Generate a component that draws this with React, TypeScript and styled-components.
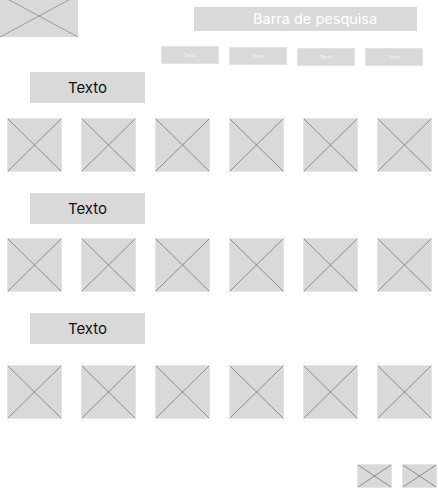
import React from 'react';
import styled, { createGlobalStyle } from 'styled-components';

const GlobalStyle = createGlobalStyle`
    html, body {
        margin: 0;
        padding: 0;
        background: #ffffff;
    }
    body {
        font-family: Inter, 'Noto Sans', sans-serif;
        width: 438px;
        height: 490px;
        overflow: hidden;
    }
`;

const Page = styled.div`
    display: flex;
    flex-direction: column;
    width: 438px;
`;

const Header = styled.header`
    display: flex;
    align-items: flex-start;
`;

const Logo = styled.div`
    width: 78px;
    height: 37px;
    overflow: hidden;
    flex-shrink: 0;
`;

const HeaderRight = styled.div`
    display: flex;
    flex-direction: column;
    padding-left: 83px;
    padding-top: 7px;
`;

const SearchBar = styled.div`
    box-sizing: border-box;
    width: 223px;
    height: 24px;
    margin-left: 33px;
    padding-left: 59px;
    background: #d9d9d9;
    color: #ffffff;
    font-size: 14.5px;
    line-height: 24px;
`;

const Nav = styled.nav`
    display: flex;
    align-items: flex-start;
    gap: 10px;
    margin-top: 15px;
`;

const NavButton = styled.div<{ $drop: number }>`
    width: 58px;
    height: 18px;
    margin-top: ${(p) => p.$drop}px;
    background: #d9d9d9;
    border: 1px solid #e2e2e2;
    box-sizing: border-box;
    color: #f4f4f4;
    font-size: 5px;
    line-height: 16px;
    text-align: center;
`;

const Section = styled.section<{ $top: number }>`
    display: flex;
    flex-direction: column;
    margin-top: ${(p) => p.$top}px;
`;

const SectionTitle = styled.h2`
    box-sizing: border-box;
    width: 115px;
    height: 31px;
    margin: 0 0 0 30px;
    background: #d9d9d9;
    color: #111111;
    font-size: 15px;
    font-weight: 400;
    line-height: 31px;
    text-align: center;
`;

const ImageRow = styled.div<{ $gap: number }>`
    display: flex;
    gap: 19px;
    padding-left: 7px;
    margin-top: ${(p) => p.$gap}px;
`;

const Placeholder = styled.div<{ $w: number; $h: number }>`
    box-sizing: border-box;
    width: ${(p) => p.$w}px;
    height: ${(p) => p.$h}px;
    background: #d9d9d9;
    border: 1px solid #e4e4e4;
    flex-shrink: 0;

    svg {
        display: block;
        width: 100%;
        height: 100%;
    }
`;

const Footer = styled.footer`
    display: flex;
    justify-content: flex-end;
    gap: 10px;
    padding-right: 1px;
    margin-top: 45px;
`;

function Cross() {
    return (
        <svg viewBox='0 0 100 100' preserveAspectRatio='none'>
            <line x1='0' y1='0' x2='100' y2='100' stroke='#8c8c8c' strokeWidth='1' vectorEffect='non-scaling-stroke' />
            <line x1='100' y1='0' x2='0' y2='100' stroke='#8c8c8c' strokeWidth='1' vectorEffect='non-scaling-stroke' />
        </svg>
    );
}

function ImageBox({ w, h }: { w: number; h: number }) {
    return (
        <Placeholder $w={w} $h={h}>
            <Cross />
        </Placeholder>
    );
}

const navDrops = [0, 1, 2, 2];
const sections = [
    { top: 6, gap: 15 },
    { top: 21, gap: 14 },
    { top: 21, gap: 21 },
];

export default function App() {
    return (
        <>
            <GlobalStyle />
            <Page>
                <Header>
                    <Logo>
                        <svg width='78' height='37' viewBox='0 5 78 37'>
                            <rect x='0' y='0' width='78' height='42' fill='#d9d9d9' />
                            <line x1='0' y1='0' x2='78' y2='42' stroke='#8c8c8c' strokeWidth='0.8' />
                            <line x1='78' y1='0' x2='0' y2='42' stroke='#8c8c8c' strokeWidth='0.8' />
                        </svg>
                    </Logo>
                    <HeaderRight>
                        <SearchBar>Barra de pesquisa</SearchBar>
                        <Nav>
                            {navDrops.map((d, i) => (
                                <NavButton key={i} $drop={d}>
                                    Texto
                                </NavButton>
                            ))}
                        </Nav>
                    </HeaderRight>
                </Header>

                {sections.map((s, i) => (
                    <Section key={i} $top={s.top}>
                        <SectionTitle>Texto</SectionTitle>
                        <ImageRow $gap={s.gap}>
                            {Array.from({ length: 6 }).map((_, j) => (
                                <ImageBox key={j} w={55} h={54} />
                            ))}
                        </ImageRow>
                    </Section>
                ))}

                <Footer>
                    <ImageBox w={35} h={24} />
                    <ImageBox w={35} h={24} />
                </Footer>
            </Page>
        </>
    );
}
